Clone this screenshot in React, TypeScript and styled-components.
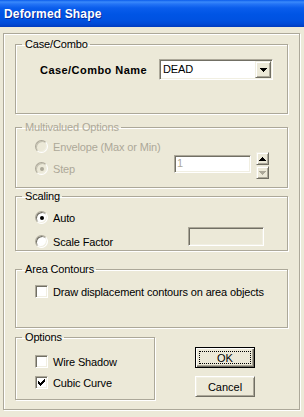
import React from "react";
import styled, { createGlobalStyle } from "styled-components";

const GlobalStyle = createGlobalStyle`
  html, body { margin: 0; padding: 0; background: #ECE9D8; }
  body {
    width: 304px; height: 417px; overflow: hidden;
    font-family: "Liberation Sans", Arial, sans-serif;
    font-size: 11px; letter-spacing: -0.15px; color: #000;
  }
  * { box-sizing: border-box; }
`;

const Window = styled.div`
  width: 304px;
  height: 417px;
  display: flex;
  flex-direction: column;
  background: #ECE9D8;
`;

const TitleBar = styled.div`
  height: 27px;
  flex: none;
  display: flex;
  align-items: center;
  padding: 1px 0 0 4px;
  background: linear-gradient(
    180deg,
    #0B5CEB 0px,
    #3A8AFB 2px,
    #2474F6 4px,
    #0A5DEC 8px,
    #0055E5 14px,
    #0052E1 20px,
    #004AD6 24px,
    #003BBE 27px
  );
  color: #fff;
  font-weight: bold;
  font-size: 12px;
  letter-spacing: 0.15px;
  text-shadow: 1px 1px 0 #0A2A9C;
`;

const Body = styled.div`
  flex: 1;
  padding: 6px 4px 0 3px;
`;

const Frame = styled.div`
  width: 297px;
  height: 377px;
  border: 1px solid #ACA899;
  box-shadow: inset 1px 1px 0 #fff, 1px 1px 0 #fff;
  padding: 4px 11px 0;
  display: flex;
  flex-direction: column;
`;

const Group = styled.fieldset<{ $top?: number; $h: number; $w?: number }>`
  margin: ${(p) => p.$top ?? 0}px 0 0;
  padding: 0;
  width: ${(p) => p.$w ?? 273}px;
  height: ${(p) => p.$h}px;
  min-width: 0;
  border: 1px solid #ACA899;
  box-shadow: inset 1px 1px 0 #fff, 1px 1px 0 #fff;
`;

const Legend = styled.legend<{ $disabled?: boolean }>`
  margin-left: 6px;
  padding: 0 2px 0 3px;
  line-height: 13px;
  font-size: 11px;
  color: ${(p) => (p.$disabled ? "#ACA899" : "#000")};
`;

/* ---------- Case/Combo ---------- */
const CaseRow = styled.div`
  display: flex;
  align-items: center;
  margin-top: 8px;
  padding-left: 24px;
`;

const BoldLabel = styled.span`
  width: 119px;
  font-weight: bold;
  letter-spacing: 0.45px;
`;

const Combo = styled.div`
  width: 114px;
  height: 21px;
  display: flex;
  padding: 1px;
  background: #fff;
  border: 1px solid;
  border-color: #ACA899 #fff #fff #ACA899;
  box-shadow: inset 1px 1px 0 #716F64, inset -1px -1px 0 #F1EFE2;
`;

const ComboValue = styled.span`
  flex: 1;
  padding-left: 2px;
  line-height: 17px;
`;

const ComboButton = styled.span`
  width: 16px;
  height: 17px;
  display: flex;
  align-items: center;
  justify-content: center;
  background: #ECE9D8;
  border: 1px solid;
  border-color: #F1EFE2 #716F64 #716F64 #F1EFE2;
  box-shadow: inset 1px 1px 0 #fff, inset -1px -1px 0 #ACA899;
`;

/* ---------- shared controls ---------- */
const ControlBody = styled.div`
  display: flex;
  align-items: flex-start;
  padding-left: 19px;
`;

const Stack = styled.div<{ $top: number; $gap: number; $w?: number }>`
  display: flex;
  flex-direction: column;
  margin-top: ${(p) => p.$top}px;
  gap: ${(p) => p.$gap}px;
  width: ${(p) => (p.$w ? `${p.$w}px` : "auto")};
  flex: none;
`;

const Option = styled.label<{ $disabled?: boolean }>`
  display: flex;
  align-items: center;
  gap: 5px;
  height: 13px;
  white-space: nowrap;
  color: ${(p) => (p.$disabled ? "#ACA899" : "#000")};
`;

const RadioCircle = styled.span<{ $disabled?: boolean }>`
  width: 13px;
  height: 13px;
  flex: none;
  border-radius: 50%;
  border: 1px solid;
  border-color: #ACA899 #fff #fff #ACA899;
  box-shadow: inset 1px 1px 0 ${(p) => (p.$disabled ? "#C5C2B2" : "#716F64")},
    inset -1px -1px 0 #F1EFE2;
  background: ${(p) => (p.$disabled ? "#ECE9D8" : "#fff")};
  display: flex;
  align-items: center;
  justify-content: center;
`;

const RadioDot = styled.span<{ $disabled?: boolean }>`
  width: 4px;
  height: 4px;
  border-radius: 50%;
  background: ${(p) => (p.$disabled ? "#ACA899" : "#000")};
`;

const CheckBox = styled.span`
  width: 13px;
  height: 13px;
  flex: none;
  border: 1px solid;
  border-color: #ACA899 #fff #fff #ACA899;
  box-shadow: inset 1px 1px 0 #716F64, inset -1px -1px 0 #F1EFE2;
  background: #fff;
  display: flex;
  align-items: center;
  justify-content: center;
`;

const TextBox = styled.div<{ $w: number; $h: number; $top: number; $disabled?: boolean; $filled?: boolean }>`
  width: ${(p) => p.$w}px;
  height: ${(p) => p.$h}px;
  margin-top: ${(p) => p.$top}px;
  flex: none;
  padding-left: 2px;
  line-height: ${(p) => p.$h - 4}px;
  color: ${(p) => (p.$disabled ? "#ACA899" : "#000")};
  background: ${(p) => (p.$filled ? "#fff" : "#ECE9D8")};
  border: 1px solid;
  border-color: #ACA899 #fff #fff #ACA899;
  box-shadow: inset 1px 1px 0 #716F64, inset -1px -1px 0 #F1EFE2;
`;

const SpinField = styled.div`
  display: flex;
  align-items: flex-start;
  gap: 5px;
  margin-top: 18px;
`;

const Spinner = styled.div`
  display: flex;
  flex-direction: column;
  gap: 1px;
`;

const SpinButton = styled.span`
  width: 13px;
  height: 13px;
  display: flex;
  align-items: center;
  justify-content: center;
  background: #ECE9D8;
  border: 1px solid;
  border-color: #F1EFE2 #716F64 #716F64 #F1EFE2;
  box-shadow: inset 1px 1px 0 #fff, inset -1px -1px 0 #ACA899;
`;

/* ---------- bottom ---------- */
const BottomRow = styled.div`
  display: flex;
  align-items: flex-start;
  margin-top: 3px;
`;

const ButtonColumn = styled.div`
  display: flex;
  flex-direction: column;
  gap: 8px;
  margin: 16px 0 0 40px;
`;

const PushButton = styled.button<{ $default?: boolean }>`
  width: 60px;
  height: 21px;
  padding: ${(p) => (p.$default ? "3px 3px 3px 3px" : "0")};
  margin: 0;
  display: flex;
  align-items: center;
  justify-content: center;
  font: inherit;
  font-size: 11px;
  color: #000;
  background: #ECE9D8;
  border: 1px solid;
  border-color: ${(p) => (p.$default ? "#000" : "#fff #716F64 #716F64 #fff")};
  box-shadow: ${(p) =>
    p.$default
      ? "inset 1px 1px 0 #fff, inset -1px -1px 0 #716F64, inset -2px -2px 0 #ACA899"
      : "inset 1px 1px 0 #F1EFE2, inset -1px -1px 0 #ACA899"};
`;

const FocusRing = styled.span`
  width: 100%;
  height: 100%;
  display: flex;
  align-items: center;
  justify-content: center;
  border: 1px dotted #000;
`;

/* ---------- icons ---------- */
const Arrow = ({ dir, color }: { dir: "up" | "down"; color: string }) => (
  <svg width="7" height="4" viewBox="0 0 7 4" shapeRendering="crispEdges">
    {dir === "down" ? (
      <polygon points="0,0 7,0 3.5,4" fill={color} />
    ) : (
      <polygon points="0,4 7,4 3.5,0" fill={color} />
    )}
  </svg>
);

const CHECK_PIXELS = [
  [6, 0],
  [5, 1], [6, 1],
  [0, 2], [4, 2], [5, 2], [6, 2],
  [0, 3], [1, 3], [3, 3], [4, 3], [5, 3],
  [0, 4], [1, 4], [2, 4], [3, 4], [4, 4],
  [1, 5], [2, 5], [3, 5],
  [2, 6],
];

const CheckMark = () => (
  <svg width="7" height="7" viewBox="0 0 7 7" shapeRendering="crispEdges">
    {CHECK_PIXELS.map(([x, y]) => (
      <rect key={`${x}-${y}`} x={x} y={y} width="1" height="1" fill="#000" />
    ))}
  </svg>
);

const Radio = ({ checked, disabled }: { checked?: boolean; disabled?: boolean }) => (
  <RadioCircle $disabled={disabled}>{checked && <RadioDot $disabled={disabled} />}</RadioCircle>
);

const Check = ({ checked }: { checked?: boolean }) => <CheckBox>{checked && <CheckMark />}</CheckBox>;

export default function App() {
  return (
    <>
      <GlobalStyle />
      <Window>
        <TitleBar>Deformed Shape</TitleBar>
        <Body>
          <Frame>
            <Group $h={76}>
              <Legend>Case/Combo</Legend>
              <CaseRow>
                <BoldLabel>Case/Combo Name</BoldLabel>
                <Combo>
                  <ComboValue>DEAD</ComboValue>
                  <ComboButton>
                    <Arrow dir="down" color="#000" />
                  </ComboButton>
                </Combo>
              </CaseRow>
            </Group>

            <Group $top={7} $h={67}>
              <Legend $disabled>Multivalued Options</Legend>
              <ControlBody>
                <Stack $top={6} $gap={9} $w={139}>
                  <Option $disabled>
                    <Radio disabled />
                    <span>Envelope (Max or Min)</span>
                  </Option>
                  <Option $disabled>
                    <Radio disabled checked />
                    <span>Step</span>
                  </Option>
                </Stack>
                <SpinField>
                  <TextBox $w={77} $h={18} $top={3} $disabled $filled>
                    1
                  </TextBox>
                  <Spinner>
                    <SpinButton>
                      <Arrow dir="up" color="#000" />
                    </SpinButton>
                    <SpinButton>
                      <Arrow dir="down" color="#ACA899" />
                    </SpinButton>
                  </Spinner>
                </SpinField>
              </ControlBody>
            </Group>

            <Group $top={2} $h={61}>
              <Legend>Scaling</Legend>
              <ControlBody>
                <Stack $top={8} $gap={11} $w={153}>
                  <Option>
                    <Radio checked />
                    <span>Auto</span>
                  </Option>
                  <Option>
                    <Radio />
                    <span>Scale Factor</span>
                  </Option>
                </Stack>
                <TextBox $w={76} $h={19} $top={24} />
              </ControlBody>
            </Group>

            <Group $top={12} $h={65}>
              <Legend>Area Contours</Legend>
              <ControlBody>
                <Stack $top={9} $gap={0}>
                  <Option>
                    <Check />
                    <span>Draw displacement contours on area objects</span>
                  </Option>
                </Stack>
              </ControlBody>
            </Group>

            <BottomRow>
              <Group $h={69} $w={140}>
                <Legend>Options</Legend>
                <ControlBody>
                  <Stack $top={11} $gap={8}>
                    <Option>
                      <Check />
                      <span>Wire Shadow</span>
                    </Option>
                    <Option>
                      <Check checked />
                      <span>Cubic Curve</span>
                    </Option>
                  </Stack>
                </ControlBody>
              </Group>
              <ButtonColumn>
                <PushButton $default>
                  <FocusRing>OK</FocusRing>
                </PushButton>
                <PushButton>Cancel</PushButton>
              </ButtonColumn>
            </BottomRow>
          </Frame>
        </Body>
      </Window>
    </>
  );
}
